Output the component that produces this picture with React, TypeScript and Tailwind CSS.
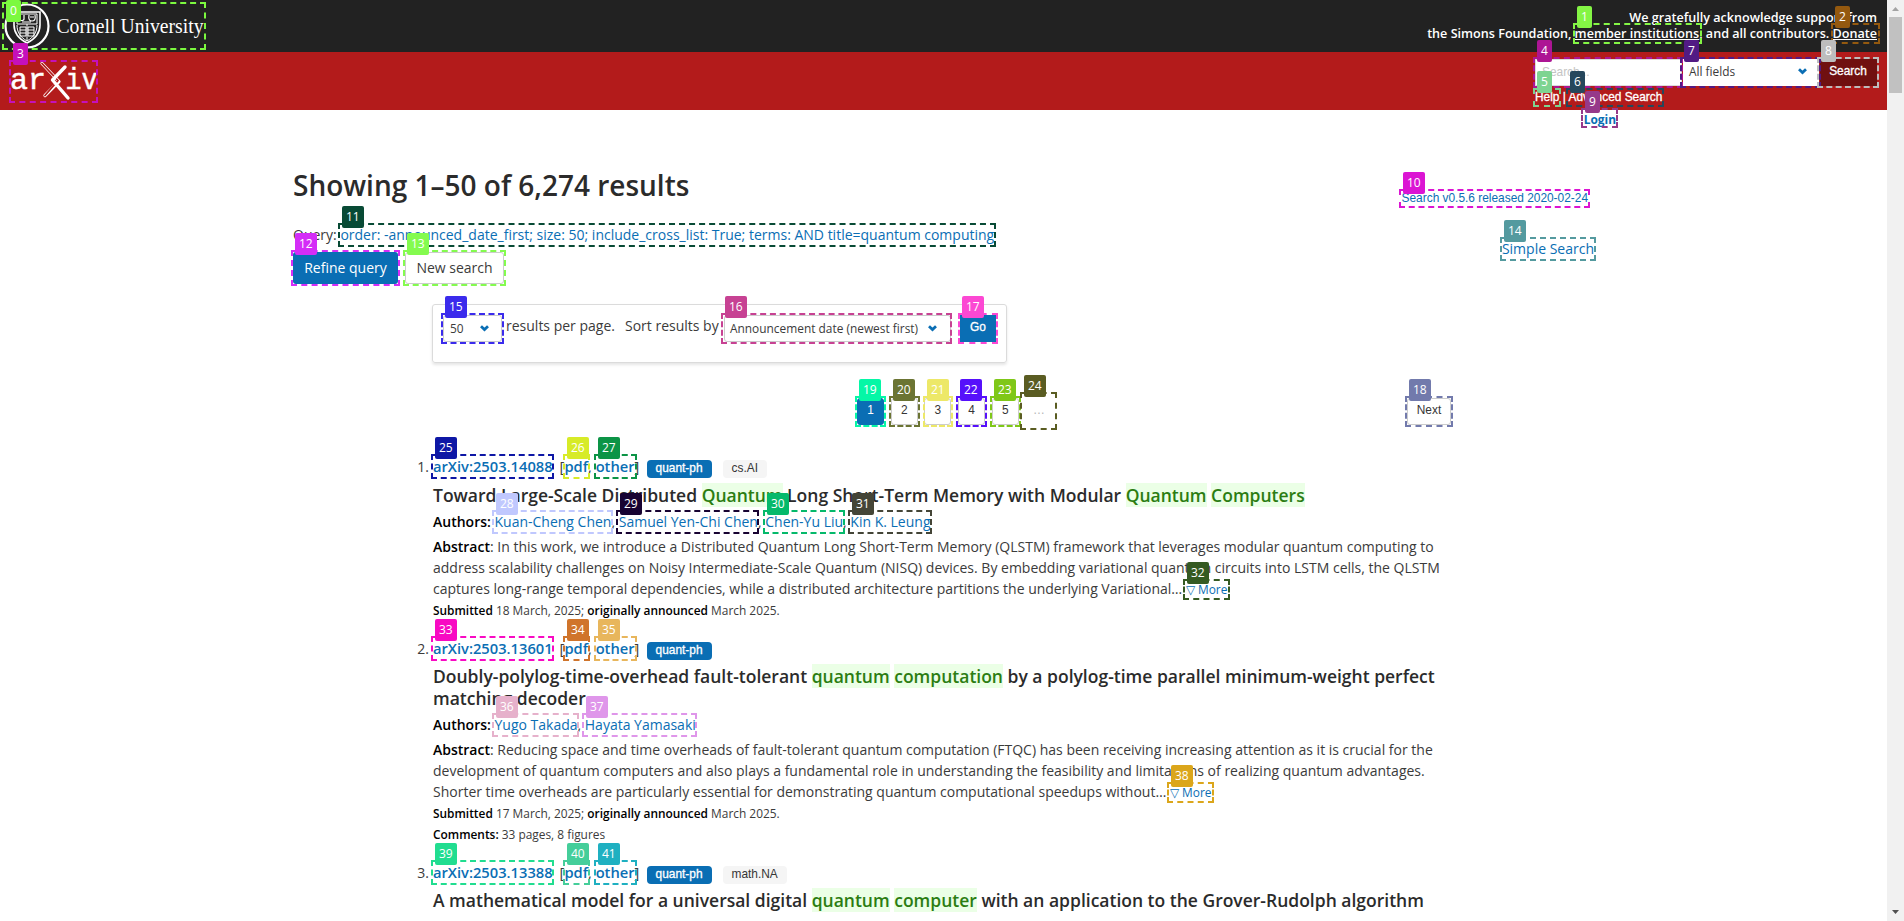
import type { ReactNode } from "react";

type Mark = [id: number, x: number, y: number, w: number, h: number, color: string];

const marks: Mark[] = [
  [0, 2, 2, 204, 48, "#7cf93f"],
  [1, 1573, 23, 129, 21, "#84f545"],
  [2, 1831, 23, 49, 21, "#94590f"],
  [3, 9, 60, 89, 43, "#c510bb"],
  [4, 1533, 57, 150, 31, "#ad1594"],
  [5, 1533, 88, 28, 19, "#7ed491"],
  [6, 1566, 88, 98, 19, "#26475c"],
  [7, 1680, 57, 141, 31, "#521b84"],
  [8, 1817, 57, 62, 31, "#bdbdbd"],
  [9, 1581, 108, 37, 20, "#96398a"],
  [10, 1399, 189, 191, 19, "#db15d3"],
  [11, 338, 223, 658, 24, "#084a35"],
  [12, 291, 250, 109, 36, "#d42df7"],
  [13, 403, 250, 103, 36, "#84fb4f"],
  [14, 1500, 237, 96, 24, "#549a9f"],
  [15, 441, 313, 63, 31, "#3b2bec"],
  [16, 721, 313, 231, 31, "#c74293"],
  [17, 958, 313, 40, 31, "#fc48d3"],
  [18, 1405, 396, 48, 31, "#727aac"],
  [19, 855, 396, 31, 31, "#05f7a6"],
  [20, 889, 396, 31, 31, "#6b7433"],
  [21, 923, 396, 30, 31, "#ede868"],
  [22, 956, 396, 31, 31, "#5610fb"],
  [23, 990, 396, 31, 31, "#7fc718"],
  [24, 1020, 392, 37, 38, "#5a5c22"],
  [25, 431, 454, 123, 25, "#0e17a5"],
  [26, 563, 454, 27, 25, "#d7eb28"],
  [27, 594, 454, 43, 25, "#0c9446"],
  [28, 492, 510, 121, 24, "#c0c8fe"],
  [29, 616, 510, 143, 24, "#180332"],
  [30, 763, 510, 82, 24, "#05b96b"],
  [31, 848, 510, 84, 24, "#444537"],
  [32, 1183, 579, 47, 21, "#355a22"],
  [33, 431, 636, 123, 25, "#f80ac3"],
  [34, 563, 636, 27, 25, "#d0742b"],
  [35, 594, 636, 43, 25, "#e8b65c"],
  [36, 492, 713, 87, 24, "#e6b1cb"],
  [37, 582, 713, 115, 24, "#df96ea"],
  [38, 1167, 782, 47, 21, "#dba61b"],
  [39, 431, 860, 123, 25, "#21dd90"],
  [40, 563, 860, 27, 25, "#45ce9a"],
  [41, 594, 860, 43, 25, "#1fb0c1"],
];

function Marks() {
  return (
    <div className="pointer-events-none absolute inset-0">
      {marks.map(([id, x, y, w, h, color]) => (
        <div
          key={id}
          className="absolute border-2 border-dashed"
          style={{ left: x, top: y, width: w, height: h, borderColor: color }}
        />
      ))}
      {marks.map(([id, x, y, , , color]) => (
        <span
          key={id}
          className="absolute h-[22px] rounded-[2px] px-1 text-[12px] leading-[21px] text-white"
          style={{ left: x + 4, top: Math.max(0, y - 17), backgroundColor: color }}
        >
          {id}
        </span>
      ))}
    </div>
  );
}

function Chevron() {
  return (
    <svg viewBox="0 0 9 7" className="h-[7px] w-[9px] shrink-0" fill="none" stroke="#0a6eb4" strokeWidth="2.8">
      <path d="M1 1.2l3.5 3.3L8 1.2" />
    </svg>
  );
}

function CornellLogo() {
  return (
    <svg viewBox="0 0 204 48" className="h-[48px] w-[204px]" fill="none" stroke="#fff">
      <circle cx="25" cy="24" r="21.5" strokeWidth="2.2" />
      <path d="M12 10h26v13c0 9-5 14-13 18-8-4-13-9-13-18z" strokeWidth="1.6" />
      <path d="M15 12h20v10H15zM25 22v17M15 23c0 7 3 12 10 16 7-4 10-9 10-16" strokeWidth="1" />
      <path d="M18 25h6v9h-6zM26 25h6v9h-6zM18 28h6M18 31h6M26 28h6M26 31h6" strokeWidth="1" />
      <path d="M17 13v4c0 2 5 2 5 0v-4M27 13c-1 5 1 6 3 6s4-1 3-6M28 15h4M20 20h9" strokeWidth="1.2" />
      <text
        x="54.5"
        y="31"
        fill="#fff"
        stroke="none"
        fontFamily="Liberation Serif, serif"
        fontSize="20"
        textLength="147"
        lengthAdjust="spacingAndGlyphs"
      >
        Cornell University
      </text>
    </svg>
  );
}

function ArxivLogo() {
  return (
    <svg viewBox="0 0 89 43" className="h-[43px] w-[89px] overflow-visible" fill="#fff">
      <g fontFamily="Liberation Mono, monospace" fontSize="29.5" stroke="#fff" strokeWidth="0.5">
        <text x="0" y="29" textLength="36" lengthAdjust="spacingAndGlyphs">ar</text>
        <text x="55.5" y="29" textLength="32" lengthAdjust="spacingAndGlyphs">iv</text>
      </g>
      <g fill="none" strokeLinecap="round" strokeLinejoin="round">
        <path d="M32 3.5L49 21.5L35 35.5" stroke="#fff" strokeWidth="3.2" />
        <path d="M32 3.5L48 20.5L35 35.5" stroke="#b31b1b" strokeWidth="1.8" />
        <path d="M55 7L42.5 20L58 38" stroke="#fff" strokeWidth="3.4" />
      </g>
    </svg>
  );
}

function Hl({ children }: { children: ReactNode }) {
  return <span className="bg-[#ebffe6] text-[#2b7d12]">{children}</span>;
}

function Tag({ primary, children }: { primary?: boolean; children: ReactNode }) {
  return (
    <span
      className={
        primary
          ? "h-[18px] rounded bg-[#0a6eb4] px-[9px] font-['Liberation_Sans',sans-serif] text-[11.9px] leading-[16px] text-white [-webkit-text-stroke:0.3px_white]"
          : "ml-[11px] h-[18px] rounded bg-[#f5f5f5] px-[9px] font-['Liberation_Sans',sans-serif] text-[11.9px] leading-[16px] text-[#363636]"
      }
    >
      {children}
    </span>
  );
}

interface Entry {
  num: number;
  id: string;
  tag?: string;
  title: ReactNode;
  authors?: string[];
  abstract?: string[];
  submitted?: string;
  comments?: string;
}

const entries: Entry[] = [
  {
    num: 1,
    id: "arXiv:2503.14088",
    tag: "cs.AI",
    title: (
      <>
        Toward Large-Scale Distributed <Hl>Quantum</Hl> Long Short-Term Memory with Modular <Hl>Quantum</Hl>{" "}
        <Hl>Computers</Hl>
      </>
    ),
    authors: ["Kuan-Cheng Chen", "Samuel Yen-Chi Chen", "Chen-Yu Liu", "Kin K. Leung"],
    abstract: [
      "In this work, we introduce a Distributed Quantum Long Short-Term Memory (QLSTM) framework that leverages modular quantum computing to",
      "address scalability challenges on Noisy Intermediate-Scale Quantum (NISQ) devices. By embedding variational quantum circuits into LSTM cells, the QLSTM",
      "captures long-range temporal dependencies, while a distributed architecture partitions the underlying Variational…",
    ],
    submitted: "18 March, 2025;",
  },
  {
    num: 2,
    id: "arXiv:2503.13601",
    title: (
      <>
        Doubly-polylog-time-overhead fault-tolerant <Hl>quantum</Hl> <Hl>computation</Hl> by a polylog-time parallel
        minimum-weight perfect
        <br />
        matching decoder
      </>
    ),
    authors: ["Yugo Takada", "Hayata Yamasaki"],
    abstract: [
      "Reducing space and time overheads of fault-tolerant quantum computation (FTQC) has been receiving increasing attention as it is crucial for the",
      "development of quantum computers and also plays a fundamental role in understanding the feasibility and limitations of realizing quantum advantages.",
      "Shorter time overheads are particularly essential for demonstrating quantum computational speedups without…",
    ],
    submitted: "17 March, 2025;",
    comments: "33 pages, 8 figures",
  },
  {
    num: 3,
    id: "arXiv:2503.13388",
    tag: "math.NA",
    title: (
      <>
        A mathematical model for a universal digital <Hl>quantum</Hl> <Hl>computer</Hl> with an application to the
        Grover-Rudolph algorithm
      </>
    ),
  },
];

function Result({ e }: { e: Entry }) {
  return (
    <li className="group mb-[17px] flex">
      <span className="w-[34px] shrink-0 pr-[4px] text-right">{e.num}.</span>
      <div className="min-w-0 whitespace-nowrap">
        <div className="flex h-[21px] items-start text-[14.7px]">
          <a className="font-semibold leading-[20px] text-[#0a6eb4]">{e.id}</a>
          <span className="ml-[7px] w-[87px] leading-[20px]">
            [<a className="font-semibold text-[#0a6eb4]">pdf</a>, <a className="font-semibold text-[#0a6eb4]">other</a>]
          </span>
          <span className="mt-[4px] flex">
            <Tag primary>quant-ph</Tag>
            {e.tag && <Tag>{e.tag}</Tag>}
          </span>
        </div>
        <p className="mt-[6px] text-[17.5px] font-semibold leading-[22px] text-[#2b2b2b] group-first:mt-[7px]">
          {e.title}
        </p>
        {e.authors && (
          <p className="mt-[5px]">
            <b className="font-semibold text-black">Authors:</b>{" "}
            {e.authors.map((a, i) => (
              <span key={a}>
                <a className="text-[#0a6eb4]">{a}</a>
                {i < e.authors!.length - 1 && ", "}
              </span>
            ))}
          </p>
        )}
        {e.abstract && (
          <p className="mt-[4px]">
            <b className="font-semibold text-black">Abstract</b>: {e.abstract[0]}
            <br />
            {e.abstract[1]}
            <br />
            {e.abstract[2]} <a className="text-[11.9px] leading-[18px] text-[#0a6eb4]">▽ More</a>
          </p>
        )}
        {e.submitted && (
          <p className="mt-px text-[11.9px] leading-[21px]">
            <b className="font-semibold text-black">Submitted</b> {e.submitted}{" "}
            <b className="font-semibold text-black">originally announced</b> March 2025.
          </p>
        )}
        {e.comments && (
          <p className="text-[11.9px] leading-[21px]">
            <b className="font-semibold text-black">Comments:</b> {e.comments}
          </p>
        )}
      </div>
    </li>
  );
}

function Scrollbar() {
  return (
    <div className="flex h-full w-[17px] flex-col items-center justify-between bg-[#f1f1f1]">
      <div className="flex flex-col items-center">
        <svg viewBox="0 0 17 17" className="size-[17px]" fill="#a3a3a3">
          <path d="M5 11l3.5-4L12 11z" />
        </svg>
        <div className="h-[76px] w-[13px] bg-[#c1c1c1]" />
      </div>
      <svg viewBox="0 0 17 17" className="size-[17px]" fill="#505050">
        <path d="M5 6l3.5 4L12 6z" />
      </svg>
    </div>
  );
}

export default function App() {
  return (
    <div className="relative flex h-[921px] w-[1904px] overflow-hidden bg-white font-['Open_Sans',sans-serif] text-[14px] leading-[21px] text-[#3b3b3b]">
      <div className="h-full w-[1887px] overflow-hidden">
        <header>
          <div className="flex h-[52px] justify-between bg-[#222] pl-[2px] pr-[10px] pt-[2px]">
            <CornellLogo />
            <p className="pt-[8px] text-right text-[12.6px] font-semibold leading-4 text-white">
              We gratefully acknowledge support from
              <br />
              the Simons Foundation, <a className="underline">member institutions</a>, and all contributors.{" "}
              <a className="underline">Donate</a>
            </p>
          </div>
          <div className="flex h-[58px] justify-between bg-[#b31b1b] pl-[10px] pr-[10px]">
            <div className="pt-[8px]">
              <ArxivLogo />
            </div>
            <div className="w-[342px] pt-[7px]">
              <div className="flex h-[27px]">
                <div className="w-[147px] border border-[#dbdbdb] bg-white pl-[6px] font-['Liberation_Sans',sans-serif] text-[11.9px] leading-[24px] text-[#c4c4c4]">
                  Search...
                </div>
                <div className="ml-px flex w-[136px] items-center justify-between bg-white pb-[2px] pl-[6px] pr-[12px] text-[11.9px]">
                  <span>All fields</span>
                  <Chevron />
                </div>
                <div className="ml-px flex-1 bg-[#701010] pr-px text-center font-['Liberation_Sans',sans-serif] text-[11.9px] leading-[24px] text-white [-webkit-text-stroke:0.3px_white]">
                  Search
                </div>
              </div>
              <p className="mt-[2px] font-['Liberation_Sans',sans-serif] text-[11.9px] leading-[18px] text-white [-webkit-text-stroke:0.3px_white]">
                Help | Advanced Search
              </p>
            </div>
          </div>
        </header>
        <div className="flex h-[57px] justify-end pr-[271px]">
          <a className="text-[11.9px] font-bold leading-[18px] text-[#0a6eb4]">Login</a>
        </div>
        <main className="ml-[293px] w-[1301px]">
          <div className="flex justify-between">
            <div>
              <h1 className="h-[57px] whitespace-nowrap text-[28px] font-semibold leading-[36px] text-[#2b2b2b]">
                Showing 1–50 of 6,274 results
              </h1>
              <p className="whitespace-nowrap">
                Query:{" "}
                <a className="text-[#0a6eb4]">
                  order: -announced_date_first; size: 50; include_cross_list: True; terms: AND title=quantum computing
                </a>
              </p>
              <div className="mt-[7px] flex gap-[7px]">
                <button className="h-[32px] w-[105px] rounded-[3px] bg-[#0a6eb4] pb-[2px] text-white">
                  Refine query
                </button>
                <button className="h-[32px] w-[99px] rounded-[3px] border border-[#ccc] bg-white pb-[2px]">
                  New search
                </button>
              </div>
            </div>
            <div className="flex flex-col items-end pt-[21px]">
              <a className="mr-[6px] font-['Liberation_Sans',sans-serif] text-[11.9px] leading-[20px] text-[#0a6eb4]">
                Search v0.5.6 released 2020-02-24
              </a>
              <a className="mt-[30px] text-[#0a6eb4]">Simple Search</a>
            </div>
          </div>
          <div className="ml-[139px] mt-[20px] flex h-[59px] w-[575px] rounded-[3px] border border-[#dbdbdb] pl-[10px] pt-[10px] shadow-[0_2px_3px_rgba(10,10,10,0.1)]">
            <div className="flex h-[27px] w-[59px] items-center justify-between rounded-[3px] border border-[#ccc] pb-px pl-[6px] pr-[12px] text-[11.9px]">
              50
              <Chevron />
            </div>
            <span className="ml-[4px] w-[119px] whitespace-nowrap">results per page.</span>
            <span className="w-[99px] whitespace-nowrap">Sort results by</span>
            <div className="flex h-[27px] w-[227px] items-center justify-between whitespace-nowrap rounded-[3px] border border-[#ccc] pb-px pl-[5px] pr-[13px] text-[11.9px]">
              Announcement date (newest first)
              <Chevron />
            </div>
            <div className="ml-[9px] h-[27px] w-[36px] bg-[#0a6eb4] text-center font-['Liberation_Sans',sans-serif] text-[11.9px] leading-[25px] text-white [-webkit-text-stroke:0.3px_white]">
              Go
            </div>
          </div>
          <nav className="mt-[35px] flex h-[27px] justify-between pl-[564px] pr-[143px] text-center font-['Liberation_Sans',sans-serif] text-[11.9px] leading-[22px] text-[#363636]">
            <div className="flex gap-[6.7px]">
              <a className="w-[27px] rounded-[3px] border border-[#0a6eb4] bg-[#0a6eb4] text-white">1</a>
              {[2, 3, 4, 5].map((n) => (
                <a key={n} className="w-[27px] rounded-[3px] border border-[#ccc]">
                  {n}
                </a>
              ))}
              <span className="w-[27px] pt-px text-[#b5b5b5]">…</span>
            </div>
            <a className="w-[44px] rounded-[3px] border border-[#ccc]">Next</a>
          </nav>
          <ol className="ml-[106px] mt-[31px]">
            {entries.map((e) => (
              <Result key={e.num} e={e} />
            ))}
          </ol>
        </main>
      </div>
      <Scrollbar />
      <Marks />
    </div>
  );
}
